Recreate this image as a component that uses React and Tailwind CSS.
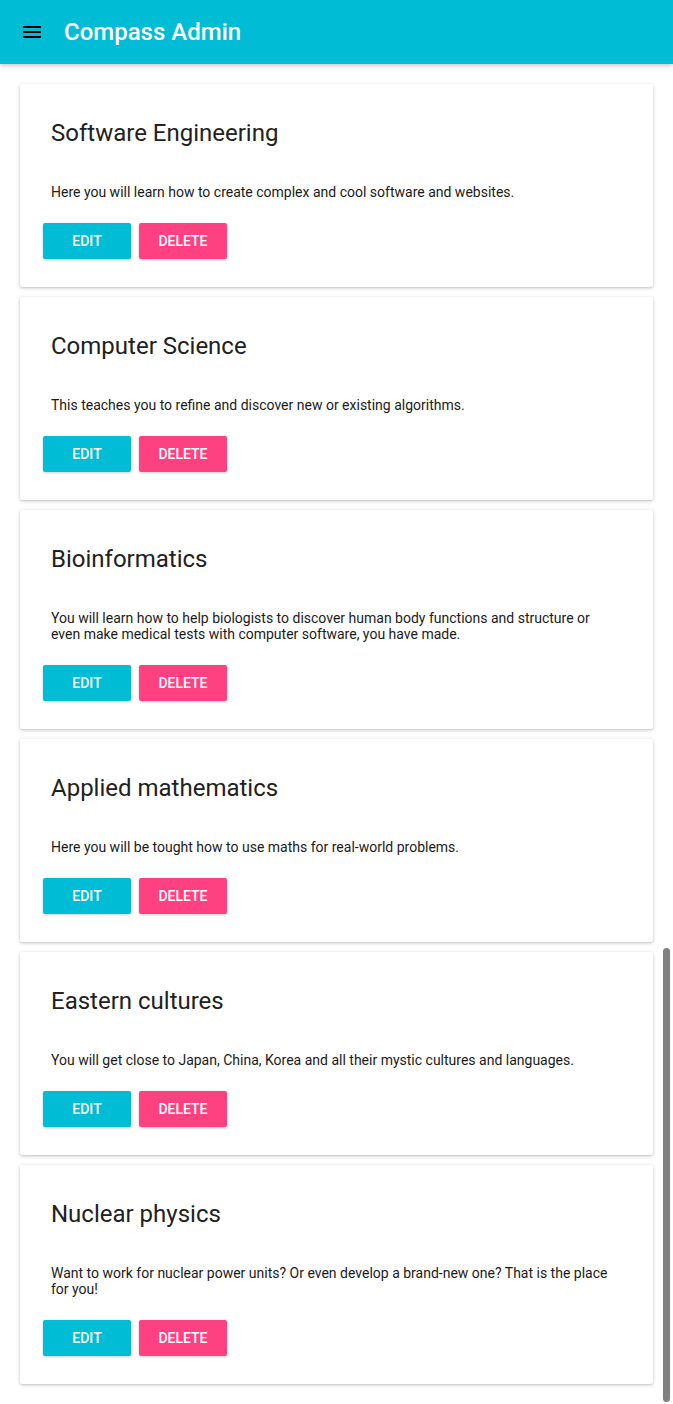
const courses = [
  {
    title: "Software Engineering",
    description: "Here you will learn how to create complex and cool software and websites.",
  },
  {
    title: "Computer Science",
    description: "This teaches you to refine and discover new or existing algorithms.",
  },
  {
    title: "Bioinformatics",
    description:
      "You will learn how to help biologists to discover human body functions and structure or even make medical tests with computer software, you have made.",
  },
  {
    title: "Applied mathematics",
    description: "Here you will be tought how to use maths for real-world problems.",
  },
  {
    title: "Eastern cultures",
    description: "You will get close to Japan, China, Korea and all their mystic cultures and languages.",
  },
  {
    title: "Nuclear physics",
    description:
      "Want to work for nuclear power units? Or even develop a brand-new one? That is the place for you!",
  },
];

const MenuIcon = () => (
  <svg width="24" height="24" viewBox="0 0 24 24" className="fill-black">
    <path d="M3 18h18v-2H3v2zm0-5h18v-2H3v2zm0-7v2h18V6H3z" />
  </svg>
);

const CourseCard = ({ course }) => (
  <div className="bg-white rounded-[2px] shadow-[0_1px_4px_rgba(0,0,0,0.18),0_1px_2px_rgba(0,0,0,0.1)]">
    <h2 className="pl-[31px] pt-[33px] text-[24px] leading-[32px] text-[#212121]">
      {course.title}
    </h2>
    <p className="pl-[31px] pr-[40px] mt-[35px] text-[14px] leading-[16px] text-[#1a1a1a]">
      {course.description}
    </p>
    <div className="flex gap-2 pl-[23px] mt-[23px] pb-[28px]">
      <button className="w-[88px] h-9 rounded-[2px] bg-[#00bcd4] text-white text-[14px] font-medium uppercase shadow-[0_1px_3px_rgba(0,0,0,0.2)]">
        Edit
      </button>
      <button className="w-[88px] h-9 rounded-[2px] bg-[#ff4081] text-white text-[14px] font-medium uppercase shadow-[0_1px_3px_rgba(0,0,0,0.2)]">
        Delete
      </button>
    </div>
  </div>
);

const App = () => {
  return (
    <div className="relative min-h-[1404px] bg-white font-['Roboto',sans-serif]">
      <header className="h-16 bg-[#00bcd4] flex items-center px-5 gap-5 shadow-[0_2px_4px_rgba(0,0,0,0.2)]">
        <MenuIcon />
        <h1 className="text-white text-[24px] font-medium">Compass Admin</h1>
      </header>
      <main className="flex flex-col gap-2.5 px-5 pt-5 pb-5">
        {courses.map((course) => (
          <CourseCard key={course.title} course={course} />
        ))}
      </main>
      <div className="absolute right-[3px] top-[948px] w-[7px] h-[454px] rounded-full bg-[#808080]" />
    </div>
  );
};

export default App;
